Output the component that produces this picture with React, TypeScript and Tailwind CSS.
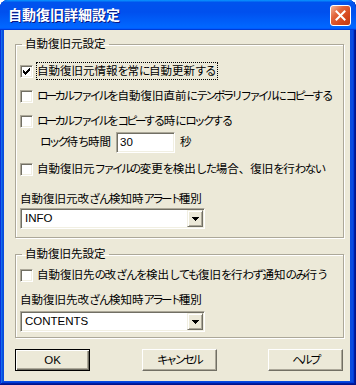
import React from "react";

const FONT = "font-['Liberation_Sans','Noto_Sans_CJK_JP',sans-serif]";

function J({ t }: { t: string }) {
  const parts = t.split(/([\u3040-\u309F]+|[\u30A0-\u30FF]+)/).filter((p) => p !== "");
  return (
    <>
      {parts.map((p, i) => {
        if (/^[\u3040-\u309F]+$/.test(p)) return <span key={i} className="tracking-[-1.5px]">{p}</span>;
        if (/^[\u30A0-\u30FF]+$/.test(p)) return <span key={i} className="tracking-[-2.7px]">{p}</span>;
        return <span key={i}>{p}</span>;
      })}
    </>
  );
}

function CheckBox({ checked = false }: { checked?: boolean }) {
  const ys = [4, 5, 6, 5, 4, 3, 2];
  return (
    <span className="relative block w-[13px] h-[13px] shrink-0 bg-white border border-t-[#ACA899] border-l-[#ACA899] border-b-white border-r-white shadow-[inset_1px_1px_0_#716F64,inset_-1px_-1px_0_#F1EFE2]">
      {checked && (
        <svg className="absolute left-0 top-0" width="11" height="11" viewBox="0 0 11 11" shapeRendering="crispEdges">
          {ys.map((y, i) => (
            <rect key={i} x={2 + i} y={y} width="1" height="3" fill="#000" />
          ))}
        </svg>
      )}
    </span>
  );
}

function CheckRow({ label, checked = false, focused = false, className = "" }: { label: string; checked?: boolean; focused?: boolean; className?: string }) {
  return (
    <div className={`flex items-center h-[18px] ${className}`}>
      <CheckBox checked={checked} />
      <span className={`ml-[3px] ${focused ? "pl-[1px] pr-[3px]" : "px-[1px]"} h-[18px] leading-[18px] whitespace-nowrap ${focused ? "outline outline-1 outline-dotted outline-black -outline-offset-1" : ""}`}>
        <J t={label} />
      </span>
    </div>
  );
}

function Select({ value, className = "" }: { value: string; className?: string }) {
  return (
    <div className={`flex w-[185px] h-[21px] bg-white border border-t-[#ACA899] border-l-[#ACA899] border-b-white border-r-white shadow-[inset_1px_1px_0_#716F64,inset_-1px_-1px_0_#F1EFE2] p-[1px] ${className}`}>
      <span className="flex-1 pl-[3px] leading-[17px] whitespace-nowrap">{value}</span>
      <span className="w-[16px] h-[17px] flex items-center justify-center bg-[#ECE9D8] border border-t-[#F1EFE2] border-l-[#F1EFE2] border-b-[#716F64] border-r-[#716F64] shadow-[inset_1px_1px_0_#fff,inset_-1px_-1px_0_#ACA899]">
        <svg width="7" height="4" viewBox="0 0 7 4" shapeRendering="crispEdges">
          <path d="M0 0H7V1H6V2H5V3H4V4H3V3H2V2H1V1H0Z" fill="#000" />
        </svg>
      </span>
    </div>
  );
}

function Button({ label, isDefault = false }: { label: string; isDefault?: boolean }) {
  return (
    <div
      className={`w-[75px] h-[22px] flex items-center justify-center bg-[#ECE9D8] border ${
        isDefault
          ? "border-black shadow-[inset_1px_1px_0_#fff,inset_-1px_-1px_0_#716F64,inset_-2px_-2px_0_#ACA899]"
          : "border-t-[#fff] border-l-[#fff] border-b-[#716F64] border-r-[#716F64] shadow-[inset_-1px_-1px_0_#ACA899]"
      }`}
    >
      <span className="leading-[16px]">
        <J t={label} />
      </span>
    </div>
  );
}

export default function App() {
  return (
    <div className={`w-[356px] h-[385px] flex flex-col rounded-t-[8px] overflow-hidden bg-[#0A4BDF] shadow-[inset_-1px_-1px_0_#00138c,inset_1px_1px_0_#0831d9,inset_-2px_-2px_0_#001ea0,inset_2px_2px_0_#166aee,inset_-3px_-3px_0_#003bda,inset_3px_3px_0_#0855dd] text-[11.5px] text-black ${FONT}`}>
      {/* Title bar */}
      <div className="h-[30px] shrink-0 flex items-center justify-between pl-[8px] pr-[5px] bg-[linear-gradient(180deg,#0997ff,#0053ee_8%,#0050ee_40%,#06f_88%,#06f_93%,#005bff_95%,#003dd7_96%,#003dd7)]">
        <span className="text-white font-bold text-[14px] leading-[18px] [text-shadow:1px_1px_#0a1883]">自動復旧詳細設定</span>
        <div className="w-[21px] h-[21px] rounded-[3px] border border-white bg-[linear-gradient(135deg,#f3b79c,#e2643a_35%,#d4461c_70%,#c03a12)] flex items-center justify-center">
          <svg width="11" height="11" viewBox="0 0 11 11">
            <path d="M1.5 1.5L9.5 9.5M9.5 1.5L1.5 9.5" stroke="#fff" strokeWidth="2" strokeLinecap="square" />
          </svg>
        </div>
      </div>

      {/* Body */}
      <div className="flex-1 ml-[4px] mr-[6px] mb-[4px] bg-[#ECE9D8] pt-[6px] pl-[11px] flex flex-col">
        <fieldset className="w-[329px] border border-[#ACA899] shadow-[1px_1px_0_#fff,inset_1px_1px_0_#fff] pl-[4px] pb-[8px]">
          <legend className="ml-[2px] px-[3px] leading-[16px]">自動復旧元設定</legend>
          <CheckRow className="mt-[10px]" label="自動復旧元情報を常に自動更新する" checked focused />
          <CheckRow className="mt-[7px]" label="ローカルファイルを自動復旧直前にテンポラリファイルにコピーする" />
          <CheckRow className="mt-[7px]" label="ローカルファイルをコピーする時にロックする" />
          <div className="mt-[2px] h-[21px] flex items-center pl-[20px]">
            <span className="w-[76px] whitespace-nowrap">
              <J t="ロック待ち時間" />
            </span>
            <div className="w-[59px] h-[21px] bg-white border border-t-[#ACA899] border-l-[#ACA899] border-b-white border-r-white shadow-[inset_1px_1px_0_#716F64,inset_-1px_-1px_0_#F1EFE2] pl-[3px] leading-[19px]">30</div>
            <span className="ml-[5px]">秒</span>
          </div>
          <CheckRow className="mt-[7px]" label="自動復旧元ファイルの変更を検出した場合、復旧を行わない" />
          <div className="mt-[13px] h-[16px] leading-[16px] whitespace-nowrap">
            <J t="自動復旧元改ざん検知時アラート種別" />
          </div>
          <Select className="mt-[1px]" value="INFO" />
        </fieldset>

        <fieldset className="mt-[8px] w-[329px] border border-[#ACA899] shadow-[1px_1px_0_#fff,inset_1px_1px_0_#fff] pl-[4px] pb-[5px]">
          <legend className="ml-[2px] px-[3px] leading-[16px]">自動復旧先設定</legend>
          <CheckRow className="mt-[4px]" label="自動復旧先の改ざんを検出しても復旧を行わず通知のみ行う" />
          <div className="mt-[8px] h-[16px] leading-[16px] whitespace-nowrap">
            <J t="自動復旧先改ざん検知時アラート種別" />
          </div>
          <Select className="mt-[3px]" value="CONTENTS" />
        </fieldset>

        <div className="mt-[11px] w-[328px] flex justify-between">
          <Button label="OK" isDefault />
          <Button label="キャンセル" />
          <Button label="ヘルプ" />
        </div>
      </div>
    </div>
  );
}
